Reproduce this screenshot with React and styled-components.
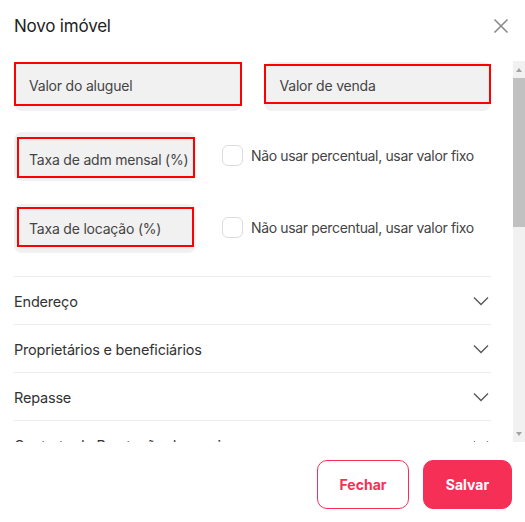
import React from "react";
import styled, { createGlobalStyle } from "styled-components";

const GlobalStyle = createGlobalStyle`
  html, body {
    margin: 0;
    padding: 0;
    background: #ffffff;
  }
  body {
    font-family: Inter, "Noto Sans", sans-serif;
    color: #333;
  }
`;

const Modal = styled.div`
  width: 525px;
  height: 522px;
  display: flex;
  flex-direction: column;
  background: #fff;
`;

const Header = styled.div`
  height: 61px;
  display: flex;
  align-items: center;
  justify-content: space-between;
  padding: 0 16px 9px 14px;
  box-sizing: border-box;
`;

const Title = styled.h2`
  margin: 0;
  font-size: 17px;
  font-weight: 400;
  color: #222;
  letter-spacing: -0.2px;
`;

const CloseButton = styled.button`
  border: none;
  background: none;
  padding: 0;
  width: 16px;
  height: 16px;
  display: flex;
  cursor: pointer;
`;

const Body = styled.div`
  height: 381px;
  display: flex;
`;

const ScrollContent = styled.div`
  flex: 1;
  min-width: 0;
  overflow: hidden;
  padding: 1px 22px 0 14px;
`;

const ScrollTrack = styled.div`
  width: 12px;
  background: #f1f1f1;
  display: flex;
  flex-direction: column;
  align-items: center;
`;

const ScrollArrow = styled.div`
  height: 17px;
  width: 12px;
  display: flex;
  align-items: center;
  justify-content: center;

  &::before {
    content: "";
    width: 0;
    height: 0;
    border-left: 3.5px solid transparent;
    border-right: 3.5px solid transparent;
    ${(p) =>
      p.$down
        ? "border-top: 4px solid #a3a3a3;"
        : "border-bottom: 4px solid #a3a3a3;"}
  }
`;

const ScrollThumb = styled.div`
  width: 12px;
  background: #c1c1c1;
`;

const Spacer = styled.div`
  flex: 1;
`;

const TopGrid = styled.div`
  display: grid;
  grid-template-columns: 1fr 1fr;
  column-gap: 22px;
`;

const FieldBox = styled.div`
  background: #f1f1f1;
  border-radius: 8px;
  height: 49px;
  width: ${(p) => p.$width || "auto"};
  padding: ${(p) => p.$inset || "0"};
  box-sizing: border-box;
`;

const FieldLabel = styled.div`
  height: ${(p) => p.$h || 44}px;
  border: 2px solid #ff0000;
  box-sizing: border-box;
  display: flex;
  align-items: center;
  padding: 3px 0 0 ${(p) => p.$pad || 13}px;
  font-size: 14px;
  color: #444;
  letter-spacing: -0.2px;
  white-space: nowrap;
`;

const RateRow = styled.div`
  display: flex;
  align-items: center;
  gap: 26px;
  margin-top: ${(p) => p.$top}px;
`;

const CheckLabel = styled.label`
  display: flex;
  align-items: center;
  gap: 8px;
  font-size: 14px;
  color: #444;
  letter-spacing: -0.35px;
  margin-top: -2px;
`;

const CheckBox = styled.span`
  width: 19px;
  height: 19px;
  border: 1px solid #dcdcdc;
  border-radius: 6px;
  background: #fff;
`;

const Accordion = styled.div`
  margin-top: 23px;
`;

const AccordionItem = styled.div`
  height: 48px;
  border-top: 1px solid #ececec;
  display: flex;
  align-items: center;
  justify-content: space-between;
  font-size: 14.5px;
  color: #333;
  letter-spacing: -0.2px;
  padding: 1px 2px 0 0;
  box-sizing: border-box;
  white-space: nowrap;
`;

const Footer = styled.div`
  flex: 1;
  display: flex;
  justify-content: flex-end;
  align-items: flex-start;
  gap: 14px;
  padding: 18px 13px 0 0;
`;

const Button = styled.button`
  height: 49px;
  width: ${(p) => p.$w}px;
  border-radius: 10px;
  font-family: Inter, "Noto Sans", sans-serif;
  font-size: 14px;
  font-weight: 700;
  cursor: pointer;
  border: 1px solid #f62f56;
  background: ${(p) => (p.$primary ? "#f62f56" : "#fff")};
  color: ${(p) => (p.$primary ? "#fff" : "#f62f56")};
`;

const Chevron = () => (
  <svg width="16" height="10" viewBox="0 0 16 10" fill="none">
    <polyline points="1,1.5 8,8.5 15,1.5" stroke="#555" strokeWidth="1.3" />
  </svg>
);

const sections = [
  "Endereço",
  "Proprietários e beneficiários",
  "Repasse",
  "Contrato de Prestação de serviço",
  "Características",
  "Fotos",
];

export default function App() {
  return (
    <>
      <GlobalStyle />
      <Modal>
        <Header>
          <Title>Novo imóvel</Title>
          <CloseButton aria-label="Fechar">
            <svg width="16" height="16" viewBox="0 0 16 16">
              <path d="M1.5 1.5 L14.5 14.5 M14.5 1.5 L1.5 14.5" stroke="#8a8a8a" strokeWidth="1.6" />
            </svg>
          </CloseButton>
        </Header>

        <Body>
          <ScrollContent>
            <TopGrid>
              <FieldBox>
                <FieldLabel>Valor do aluguel</FieldLabel>
              </FieldBox>
              <FieldBox $inset="2px 0 0 0">
                <FieldLabel $h={40} $pad={14}>Valor de venda</FieldLabel>
              </FieldBox>
            </TopGrid>

            <RateRow $top={21}>
              <FieldBox $width="182px" $inset="5px 1px 0 3px">
                <FieldLabel $h={41} $pad={10}>Taxa de adm mensal (%)</FieldLabel>
              </FieldBox>
              <CheckLabel>
                <CheckBox />
                Não usar percentual, usar valor fixo
              </CheckLabel>
            </RateRow>

            <RateRow $top={23}>
              <FieldBox $width="182px" $inset="3px 2px 0 3px">
                <FieldLabel $h={40} $pad={10}>Taxa de locação (%)</FieldLabel>
              </FieldBox>
              <CheckLabel>
                <CheckBox />
                Não usar percentual, usar valor fixo
              </CheckLabel>
            </RateRow>

            <Accordion>
              {sections.map((s) => (
                <AccordionItem key={s}>
                  {s}
                  <Chevron />
                </AccordionItem>
              ))}
            </Accordion>
          </ScrollContent>

          <ScrollTrack>
            <ScrollArrow />
            <ScrollThumb style={{ height: 149 }} />
            <Spacer />
            <ScrollArrow $down />
          </ScrollTrack>
        </Body>

        <Footer>
          <Button $w={92}>Fechar</Button>
          <Button $w={89} $primary>
            Salvar
          </Button>
        </Footer>
      </Modal>
    </>
  );
}
